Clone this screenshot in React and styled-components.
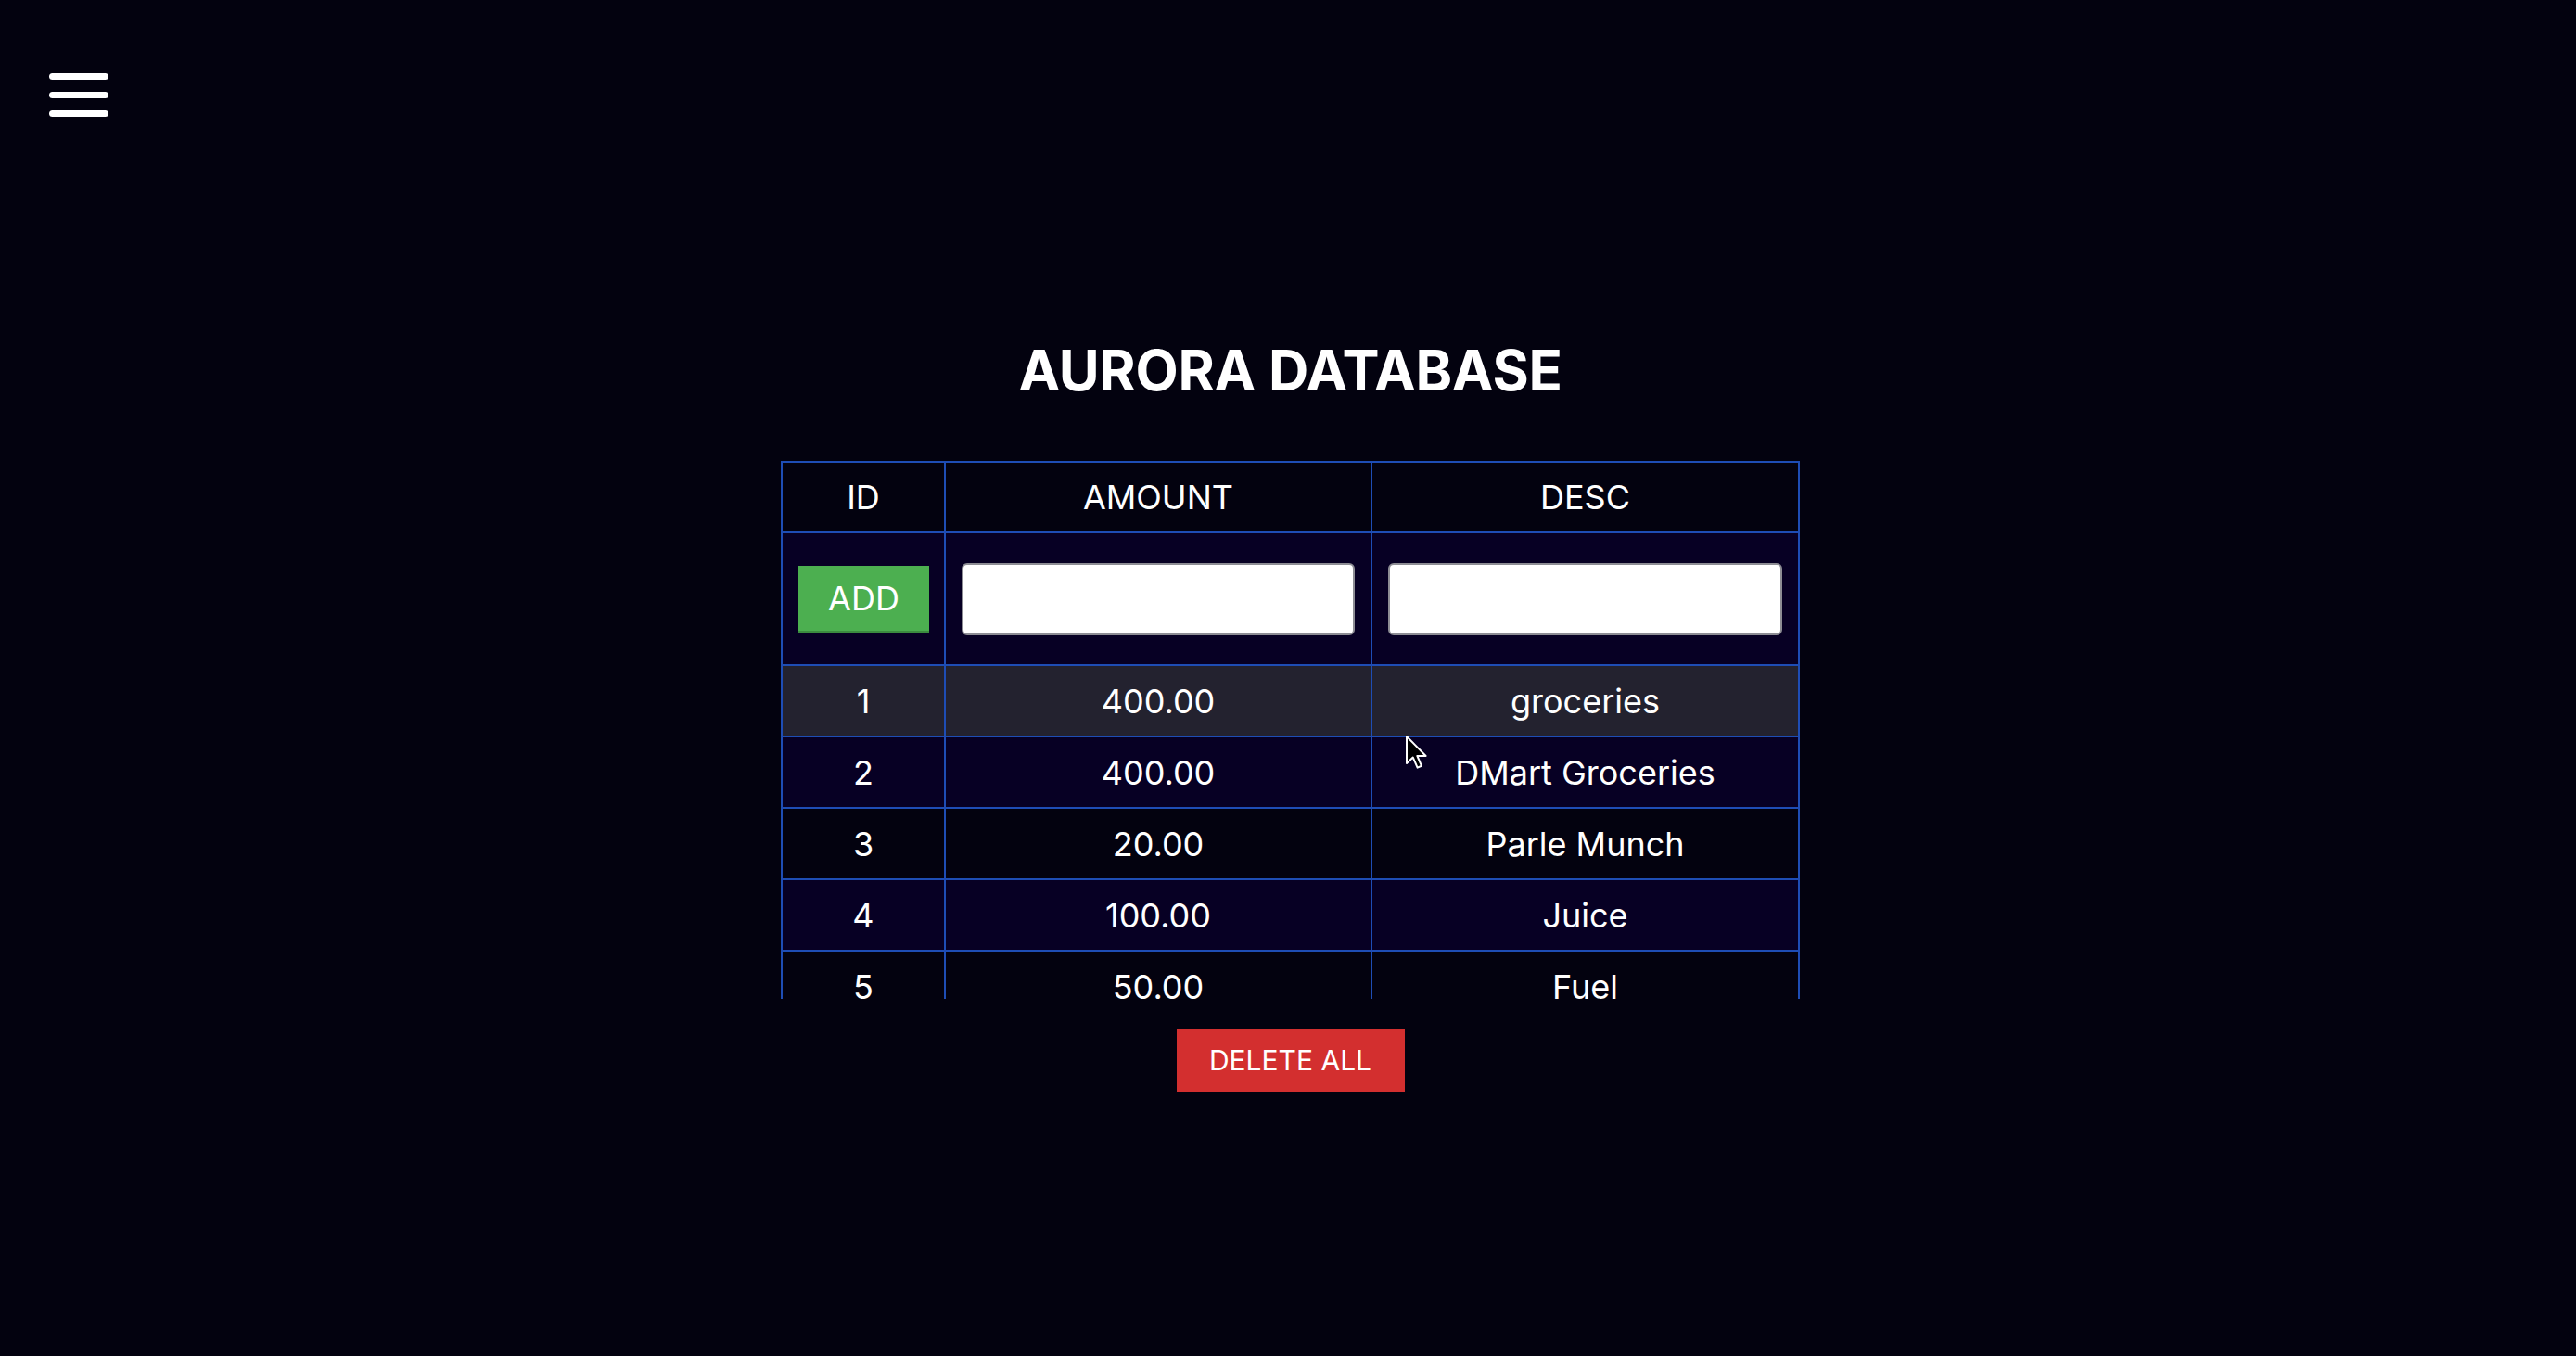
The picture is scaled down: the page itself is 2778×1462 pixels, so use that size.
import React from 'react';
import styled, { createGlobalStyle } from 'styled-components';

const GlobalStyle = createGlobalStyle`
    html, body {
        margin: 0;
        padding: 0;
        background-color: #03020f;
    }
    * {
        box-sizing: border-box;
    }
`;

const Page = styled.div`
    position: relative;
    min-height: 1462px;
    background-color: #03020f;
    font-family: Inter, "Noto Sans", sans-serif;
    color: #ffffff;
`;

const TopBar = styled.header`
    display: flex;
    align-items: center;
    padding: 79px 0 0 53px;
`;

const MenuButton = styled.button`
    display: flex;
    flex-direction: column;
    gap: 13px;
    width: 64px;
    padding: 0;
    border: none;
    background: transparent;
    cursor: pointer;
`;

const MenuLine = styled.span`
    display: block;
    height: 7px;
    width: 100%;
    border-radius: 4px;
    background-color: #ffffff;
`;

const Main = styled.main`
    display: flex;
    flex-direction: column;
    align-items: center;
    padding-top: 236px;
    padding-left: 5px;
`;

const Title = styled.h1`
    margin: 0;
    font-size: 60px;
    line-height: 74px;
    font-weight: 700;
    letter-spacing: -0.3px;
`;

const TableScroll = styled.div`
    margin-top: 61px;
    height: 580px;
    overflow-y: auto;
    scrollbar-width: none;
    &::-webkit-scrollbar {
        display: none;
    }
`;

const Table = styled.table`
    width: 1097px;
    table-layout: fixed;
    border-collapse: collapse;
    font-size: 36px;
`;

const Row = styled.tr`
    background-color: ${props => props.hovered ? '#23222f' : props.shade ? '#070024' : '#03020f'};
`;

const HeadCell = styled.th`
    height: 76px;
    padding: 0;
    border: 2px solid #1e4db5;
    font-weight: 400;
    text-align: center;
`;

const Cell = styled.td`
    height: ${props => props.tall ? '143px' : '77px'};
    padding: 0 17px;
    border: 2px solid #1e4db5;
    text-align: center;
    white-space: nowrap;
`;

const AddButton = styled.button`
    display: block;
    margin: 0 auto;
    width: 141px;
    height: 72px;
    border: none;
    border-bottom: 2px solid #3b8c3f;
    background-color: #4caf50;
    color: #ffffff;
    font-family: inherit;
    font-size: 36px;
    cursor: pointer;
`;

const TextInput = styled.input`
    display: block;
    width: 100%;
    height: 78px;
    border: 2px solid #8d8d94;
    border-radius: 6px;
    background-color: #ffffff;
    font-family: inherit;
    font-size: 30px;
    padding: 0 14px;
    outline: none;
`;

const DeleteButton = styled.button`
    margin-top: 32px;
    width: 246px;
    height: 68px;
    border: none;
    background-color: #d32f2f;
    color: #ffffff;
    font-family: inherit;
    font-size: 30px;
    text-transform: uppercase;
    cursor: pointer;
`;

const Pointer = styled.svg`
    position: absolute;
    left: 1515px;
    top: 792px;
    width: 26px;
    height: 38px;
    pointer-events: none;
`;

const expenses = [
    { id: 1, amount: '400.00', desc: 'groceries' },
    { id: 2, amount: '400.00', desc: 'DMart Groceries' },
    { id: 3, amount: '20.00', desc: 'Parle Munch' },
    { id: 4, amount: '100.00', desc: 'Juice' },
    { id: 5, amount: '50.00', desc: 'Fuel' },
    { id: 6, amount: '250.00', desc: 'Snacks' },
];

const App = () => {
    return (
        <Page>
            <GlobalStyle />
            <TopBar>
                <MenuButton aria-label="menu">
                    <MenuLine />
                    <MenuLine />
                    <MenuLine />
                </MenuButton>
            </TopBar>
            <Main>
                <Title>AURORA DATABASE</Title>
                <TableScroll>
                    <Table>
                        <colgroup>
                            <col style={{ width: 176 }} />
                            <col style={{ width: 460 }} />
                            <col style={{ width: 461 }} />
                        </colgroup>
                        <thead>
                            <Row>
                                <HeadCell>ID</HeadCell>
                                <HeadCell>AMOUNT</HeadCell>
                                <HeadCell>DESC</HeadCell>
                            </Row>
                        </thead>
                        <tbody>
                            <Row shade>
                                <Cell tall><AddButton>ADD</AddButton></Cell>
                                <Cell tall><TextInput type="text" /></Cell>
                                <Cell tall><TextInput type="text" /></Cell>
                            </Row>
                            {expenses.map((item, i) => (
                                <Row key={item.id} hovered={i === 0} shade={i % 2 === 1}>
                                    <Cell>{item.id}</Cell>
                                    <Cell>{item.amount}</Cell>
                                    <Cell>{item.desc}</Cell>
                                </Row>
                            ))}
                        </tbody>
                    </Table>
                </TableScroll>
                <DeleteButton>Delete All</DeleteButton>
            </Main>
            <Pointer viewBox="0 0 13 19">
                <path d="M1 1 L1 15.5 L4.4 12.3 L6.8 17.8 L9 16.9 L6.7 11.5 L11.3 11.5 Z" fill="#000000" stroke="#ffffff" strokeWidth="1" strokeLinejoin="round" />
            </Pointer>
        </Page>
    );
};

export default App;
